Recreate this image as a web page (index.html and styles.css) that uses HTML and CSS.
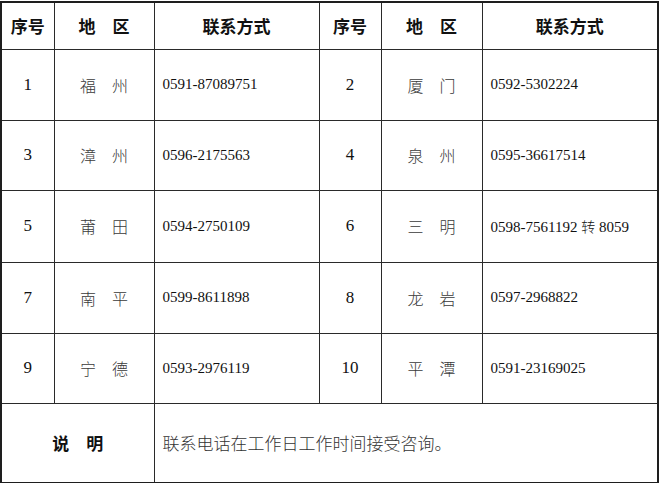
FILE: index.html
```html
<!DOCTYPE html>
<html lang="zh-CN">
<head>
<meta charset="utf-8">
<title>联系方式</title>
<link rel="stylesheet" href="styles.css">
</head>
<body>
<table class="contacts">
  <colgroup>
    <col class="c-no">
    <col class="c-area">
    <col class="c-tel">
    <col class="c-no2">
    <col class="c-area2">
    <col class="c-tel2">
  </colgroup>
  <thead>
    <tr class="head">
      <th>序号</th><th>地　区</th><th>联系方式</th>
      <th>序号</th><th>地　区</th><th>联系方式</th>
    </tr>
  </thead>
  <tbody>
    <tr class="r1">
      <td class="no">1</td><td class="area">福　州</td><td class="tel">0591-87089751</td>
      <td class="no">2</td><td class="area">厦　门</td><td class="tel">0592-5302224</td>
    </tr>
    <tr class="r2">
      <td class="no">3</td><td class="area">漳　州</td><td class="tel">0596-2175563</td>
      <td class="no">4</td><td class="area">泉　州</td><td class="tel">0595-36617514</td>
    </tr>
    <tr class="r3">
      <td class="no">5</td><td class="area">莆　田</td><td class="tel">0594-2750109</td>
      <td class="no">6</td><td class="area">三　明</td><td class="tel">0598-7561192 <span class="cjk">转</span> 8059</td>
    </tr>
    <tr class="r4">
      <td class="no">7</td><td class="area">南　平</td><td class="tel">0599-8611898</td>
      <td class="no">8</td><td class="area">龙　岩</td><td class="tel">0597-2968822</td>
    </tr>
    <tr class="r5">
      <td class="no">9</td><td class="area">宁　德</td><td class="tel">0593-2976119</td>
      <td class="no">10</td><td class="area">平　潭</td><td class="tel">0591-23169025</td>
    </tr>
    <tr class="note">
      <th colspan="2" class="note-label">说　明</th>
      <td colspan="4" class="note-text">联系电话在工作日工作时间接受咨询。</td>
    </tr>
  </tbody>
</table>
</body>
</html>
```

FILE: styles.css
```css
html, body {
  margin: 0;
  padding: 0;
  background: #ffffff;
}

body {
  padding-top: 1px;
}

.contacts {
  border-collapse: collapse;
  table-layout: fixed;
  width: 657px;
  border: 2px solid #1e1e1e;
}

.c-no { width: 53px; }
.c-area { width: 100px; }
.c-tel { width: 165px; }
.c-no2 { width: 62px; }
.c-area2 { width: 101px; }
.c-tel2 { width: 176px; }

.contacts th,
.contacts td {
  border: 1px solid #2a2a2a;
  padding: 0;
  vertical-align: middle;
}

.contacts th {
  font-family: "Noto Sans CJK SC", sans-serif;
  font-weight: 700;
  font-size: 17px;
  color: #111;
  text-align: center;
}

.head { height: 47px; }
.r1 { height: 71px; }
.r2 { height: 70px; }
.r3 { height: 72px; }
.r4 { height: 71px; }
.r5 { height: 70px; }
.note { height: 80px; }

.no {
  font-family: "Liberation Serif", "Times New Roman", serif;
  font-size: 17px;
  color: #111;
  text-align: center;
}

.area {
  font-family: "Noto Sans CJK SC", sans-serif;
  font-weight: 300;
  font-size: 16px;
  color: #3a3a3a;
  text-align: center;
}

.tel {
  font-family: "Liberation Serif", "Times New Roman", serif;
  font-size: 15px;
  color: #111;
  text-align: left;
  padding-left: 8px !important;
}

.cjk {
  font-family: "Noto Sans CJK SC", sans-serif;
  font-weight: 300;
  font-size: 14px;
}

.note-text {
  font-family: "Noto Sans CJK SC", sans-serif;
  font-weight: 300;
  font-size: 17px;
  color: #333;
  padding-left: 8px !important;
}
```
